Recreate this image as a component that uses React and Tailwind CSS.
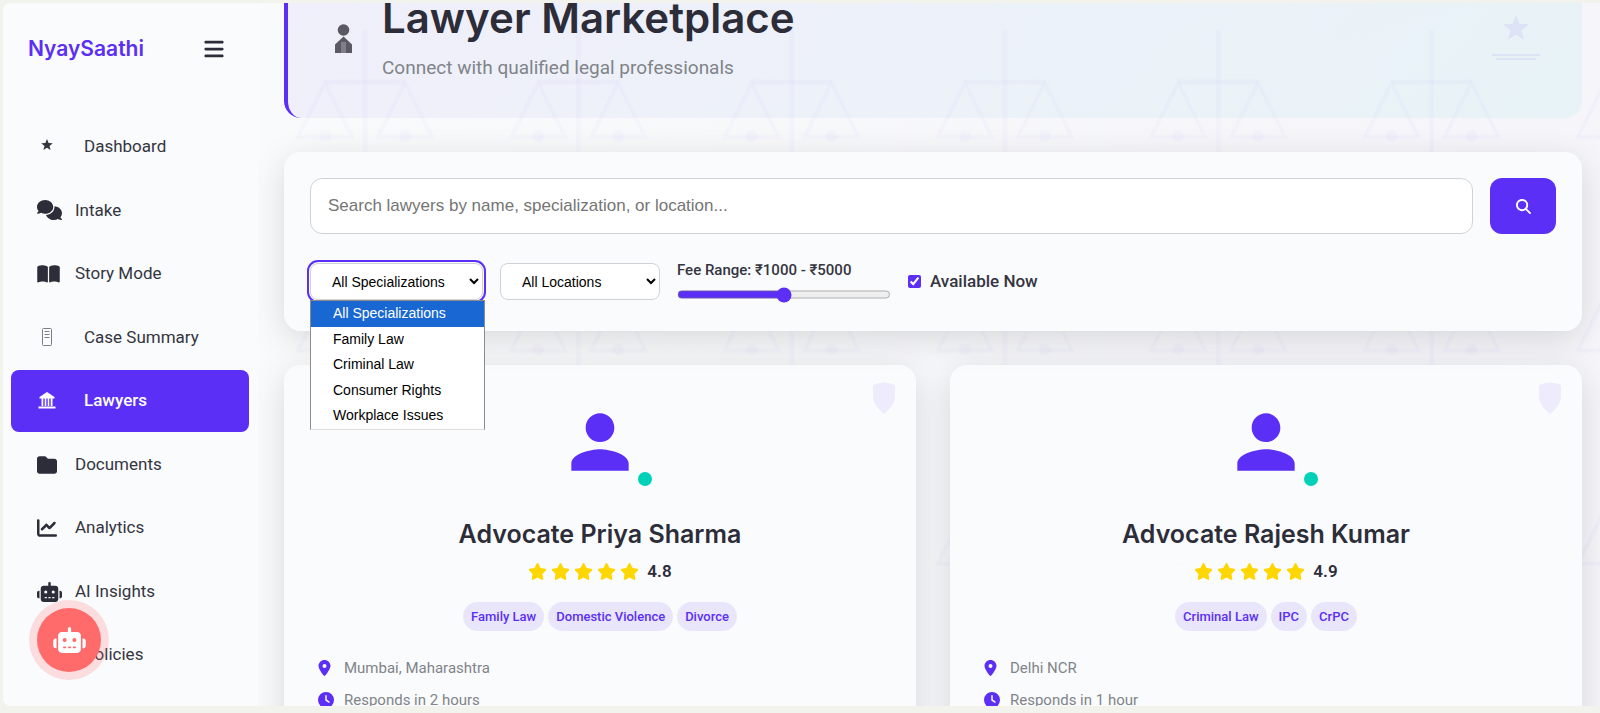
import React, {useState} from 'react';
import {FaBars, FaBookOpen, FaChartLine, FaClock, FaComments, FaFolder, FaLocationDot, FaMagnifyingGlass, FaRobot, FaStar} from 'react-icons/fa6';
import {MdPerson} from 'react-icons/md';

const specializations = ['All Specializations', 'Family Law', 'Criminal Law', 'Consumer Rights', 'Workplace Issues'];
const locations = ['All Locations', 'Mumbai', 'Delhi NCR', 'Bengaluru'];

const lawyers = [
    {
        name: 'Advocate Priya Sharma',
        rating: '4.8',
        tags: ['Family Law', 'Domestic Violence', 'Divorce'],
        location: 'Mumbai, Maharashtra',
        response: 'Responds in 2 hours',
    },
    {
        name: 'Advocate Rajesh Kumar',
        rating: '4.9',
        tags: ['Criminal Law', 'IPC', 'CrPC'],
        location: 'Delhi NCR',
        response: 'Responds in 1 hour',
    },
];

const StarGlyph = () => (
    <svg viewBox="0 0 20 20" className="h-5 w-5" fill="currentColor">
        <path d="M10 2l1.600 4 4.200.2-3.300 2.700 1.100 4.100L10 10.700 6.400 13l1.100-4.100L4.200 6.200 8.400 6z"/>
    </svg>
);

const SummaryGlyph = () => (
    <svg viewBox="0 0 20 20" className="h-5 w-5" fill="none" stroke="#7d7e85">
        <rect x="5.500" y="1.500" width="9" height="17" rx="1"/>
        <path d="M7.500 4.500h5M7.500 7.500h5M7.500 10.500h5"/>
    </svg>
);

const CourtGlyph = () => (
    <svg viewBox="0 0 20 20" className="h-5 w-5" fill="currentColor">
        <path d="M10 1l7.500 5v1.500h-15V6zM4.500 7.500h1.800V15H4.500zM7.700 7.500h1.600V15H7.700zM10.700 7.500h1.600V15h-1.600zM13.700 7.500h1.800V15h-1.800zM1.500 15.500h17v2h-17z"/>
    </svg>
);

const AdvocateGlyph = () => (
    <svg viewBox="0 0 44 44" className="h-11 w-11 shrink-0" fill="#5a5964">
        <circle cx="21.500" cy="14" r="5.800"/>
        <path d="M21.500 20.500l8.500 8V37H13v-8.500z"/>
        <path d="M19 26h5v11h-5z" fill="#807f88"/>
    </svg>
);

const navItems = [
    {label: 'Dashboard', glyph: <StarGlyph/>},
    {label: 'Intake', icon: <FaComments className="h-5 w-[25px]"/>},
    {label: 'Story Mode', icon: <FaBookOpen className="h-5 w-[23px]"/>},
    {label: 'Case Summary', glyph: <SummaryGlyph/>},
    {label: 'Lawyers', glyph: <CourtGlyph/>, active: true},
    {label: 'Documents', icon: <FaFolder className="h-5 w-5"/>},
    {label: 'Analytics', icon: <FaChartLine className="h-5 w-5"/>},
    {label: 'AI Insights', icon: <FaRobot className="h-5 w-[25px]"/>},
    {label: 'Policies', glyph: <StarGlyph/>},
];

const Sidebar = () => (
    <aside className="flex w-[255px] shrink-0 flex-col bg-[#fafbfd] pr-[9px] pb-5 pl-2">
        <div className="flex h-[92px] items-center justify-between pr-6 pl-[17px]">
            <span className="font-['Inter',sans-serif] text-[21px] font-semibold text-[#5b2ff5]">NyaySaathi</span>
            <button aria-label="Toggle menu" className="text-[#2d2d3a]"><FaBars className="h-[22px] w-[22px]"/></button>
        </div>
        <nav className="mt-[21px] grid flex-1 auto-rows-fr gap-[2px]">
            {navItems.map(item => (
                <a
                    key={item.label}
                    href="#"
                    className={item.active
                        ? 'flex items-center rounded-lg bg-[#5b2ff5] pl-[26px] text-[17px] font-medium text-white'
                        : 'flex items-center rounded-lg pl-[26px] text-[17px] text-[#34353f]'}
                >
                    {item.glyph
                        ? <span className="w-[47px] shrink-0">{item.glyph}</span>
                        : <span className="w-[38px] shrink-0 text-[#2d2d3a]">{item.icon}</span>}
                    {item.label}
                </a>
            ))}
        </nav>
    </aside>
);

// repeating scales of justice behind the content
const ScalesBackdrop = () => (
    <svg className="absolute inset-0 h-full w-full" aria-hidden="true">
        <defs>
            <pattern id="scales" width="213.300" height="213.300" patternUnits="userSpaceOnUse">
                <g fill="none" stroke="#5b2ff5" strokeOpacity="0.025" strokeWidth="5">
                    <path d="M107 27v160"/>
                    <path d="M67 79h80"/>
                    <path d="M67 80l-27 54h54zM147 80l-27 54h54z" strokeWidth="4"/>
                </g>
                <g fill="#5b2ff5" fillOpacity="0.025">
                    <circle cx="67" cy="133" r="6"/>
                    <circle cx="147" cy="133" r="6"/>
                </g>
            </pattern>
        </defs>
        <rect width="100%" height="100%" fill="url(#scales)"/>
    </svg>
);

const Hero = () => (
    <header className="relative -mt-[45px] flex items-center gap-4 rounded-[17px] border-l-4 border-[#5b2ff5] bg-linear-135 from-[#5b2ff5]/6 to-[#00d1b8]/6 px-[34px] py-[34px]">
        <AdvocateGlyph/>
        <div>
            <h1 className="font-['Inter',sans-serif] text-[42px] leading-[52px] font-semibold text-[#2d2d3a]">Lawyer Marketplace</h1>
            <p className="mt-2 text-[19px] leading-8 text-[#808488]">Connect with qualified legal professionals</p>
        </div>
        <svg viewBox="0 0 50 50" className="absolute right-[41px] bottom-[55px] h-[50px] w-[50px]" fill="#5b2ff5" fillOpacity="0.07">
            <path d="M25 2l3.300 8.800 10 .4-7.700 6.200 2.600 9.600-8.200-5.400-8.200 5.400 2.600-9.600-7.700-6.200 10-.4z"/>
            <path d="M1 41h48v2H1zM5 45h40v2H5z"/>
        </svg>
    </header>
);

const SearchPanel = () => {
    const [term, setTerm] = useState('');
    const [specialization, setSpecialization] = useState(specializations[0]);
    const [fee, setFee] = useState(3000);
    const [available, setAvailable] = useState(true);

    return (
        <section className="relative z-10 mt-[34px] rounded-[17px] bg-[#fafbfd]/95 px-[26px] pt-[26px] pb-7 shadow-[0_8px_34px_rgba(0,0,0,0.13)]">
            <div className="flex gap-[17px]">
                <input
                    type="text"
                    aria-label="Search lawyers"
                    placeholder="Search lawyers by name, specialization, or location..."
                    value={term}
                    onChange={e => setTerm(e.target.value)}
                    className="h-14 min-w-0 flex-1 rounded-xl border border-[#d0d3d6] bg-white px-[17px] font-['Liberation_Sans',sans-serif] text-[17px] placeholder:text-[#757575]"
                />
                <button aria-label="Search" className="flex h-14 w-[66px] items-center justify-center rounded-xl bg-[#5b2ff5] text-white">
                    <FaMagnifyingGlass className="h-[15px] w-[15px]"/>
                </button>
            </div>
            <div className="mt-[26px] flex items-center gap-[17px]">
                <div className="relative">
                    <select
                        aria-label="Specialization"
                        value={specialization}
                        onChange={e => setSpecialization(e.target.value)}
                        className="block h-[37px] w-[173px] rounded-lg border border-[#d0d3d6] bg-white pl-[17px] font-['Liberation_Sans',sans-serif] text-[14px] text-black outline-2 outline-offset-1 outline-[#5b2ff5]"
                    >
                        {specializations.map(s => <option key={s}>{s}</option>)}
                    </select>
                    <ul role="listbox" aria-label="Specializations" className="absolute top-full left-0 grid h-[130px] w-[175px] auto-rows-fr border border-[#8c8c8c] border-b-[#dddddd] bg-white font-['Liberation_Sans',sans-serif] text-[14px] text-black">
                        {specializations.map(s => (
                            <li
                                key={s}
                                role="option"
                                aria-selected={s === specialization}
                                onClick={() => setSpecialization(s)}
                                className={s === specialization ? 'bg-[#1967d2] pl-[22px] leading-6 text-white' : 'pl-[22px] leading-6'}
                            >
                                {s}
                            </li>
                        ))}
                    </ul>
                </div>
                <select aria-label="Location" className="h-[37px] w-[160px] rounded-lg border border-[#d0d3d6] bg-white pl-[17px] font-['Liberation_Sans',sans-serif] text-[14px] text-black">
                    {locations.map(l => <option key={l}>{l}</option>)}
                </select>
                <div className="flex flex-col gap-[6px]">
                    <label htmlFor="fee" className="text-[15px] leading-5 font-medium text-[#34353f]">Fee Range: ₹1000 - ₹5000</label>
                    <input
                        id="fee"
                        type="range"
                        min="1000"
                        max="5000"
                        value={fee}
                        onChange={e => setFee(Number(e.target.value))}
                        className="h-[17px] w-[214px] accent-[#5b2ff5]"
                    />
                </div>
                <label className="flex items-center gap-[9px] text-[17px] font-medium text-[#34353f]">
                    <input type="checkbox" checked={available} onChange={e => setAvailable(e.target.checked)} className="h-[13px] w-[13px] accent-[#5b2ff5]"/>
                    Available Now
                </label>
            </div>
        </section>
    );
};

const LawyerCard = ({lawyer}) => (
    <article className="relative rounded-[17px] bg-[#fafbfd]/95 p-[34px] shadow-[0_8px_34px_rgba(0,0,0,0.13)]">
        <svg viewBox="0 0 22 32" className="absolute top-[17px] right-[21px] h-8 w-[22px]" fill="#5b2ff5" fillOpacity="0.08">
            <path d="M0 3Q11-2 22 3v13Q21 24 11 32Q1 24 0 16z"/>
        </svg>
        <div className="relative mx-auto w-fit text-[#5b2ff5]">
            <MdPerson className="h-[86px] w-[86px]"/>
            <span className="absolute -right-[9px] -bottom-[1px] h-[14px] w-[14px] rounded-full bg-[#00d1b8]"/>
        </div>
        <h3 className="mt-8 text-center font-['Inter',sans-serif] text-[25px] leading-[34px] font-semibold text-[#2d2d3a]">{lawyer.name}</h3>
        <div className="mt-2 flex items-center justify-center gap-1 text-[#ffd700]">
            {[1, 2, 3, 4, 5].map(n => <FaStar key={n} className="h-[19px] w-[19px]"/>)}
            <span className="ml-1 text-[17px] leading-6 font-semibold text-[#2d2d3a]">{lawyer.rating}</span>
        </div>
        <div className="mt-[19px] flex justify-center gap-1">
            {lawyer.tags.map(tag => (
                <span key={tag} className="rounded-full bg-[#5b2ff5]/10 px-2 text-[13px] leading-[29px] font-medium text-[#5b2ff5]">{tag}</span>
            ))}
        </div>
        <ul className="mt-[25px] grid gap-2 text-[15px] leading-6 text-[#808488]">
            <li className="flex items-center">
                <span className="w-[26px] text-[#5b2ff5]"><FaLocationDot className="h-4 w-[13px]"/></span>
                {lawyer.location}
            </li>
            <li className="flex items-center">
                <span className="w-[26px] text-[#5b2ff5]"><FaClock className="h-4 w-4"/></span>
                {lawyer.response}
            </li>
        </ul>
    </article>
);

function App() {
    return (
        <div className="h-screen bg-[#f2f3ec] pt-[3px] pb-[7px] pl-[3px] font-['Roboto',sans-serif]">
            <div className="relative flex h-full overflow-hidden rounded-l-lg bg-linear-to-r from-[#fafbfb] to-[#f5f5fa]">
                <Sidebar/>
                <main className="relative min-w-0 flex-1 overflow-hidden pr-[18px] pl-[26px]">
                    <ScalesBackdrop/>
                    <Hero/>
                    <SearchPanel/>
                    <div className="relative mt-[34px] grid grid-cols-2 gap-[34px]">
                        {lawyers.map(lawyer => <LawyerCard key={lawyer.name} lawyer={lawyer}/>)}
                    </div>
                </main>
                <button aria-label="Open assistant" className="absolute bottom-[34px] left-[34px] flex h-16 w-16 items-center justify-center rounded-full bg-[#ff6b6b] text-white ring-8 ring-[#ff6b6b]/20">
                    <FaRobot className="h-[26px] w-[33px]"/>
                </button>
            </div>
        </div>
    );
}

export default App;
